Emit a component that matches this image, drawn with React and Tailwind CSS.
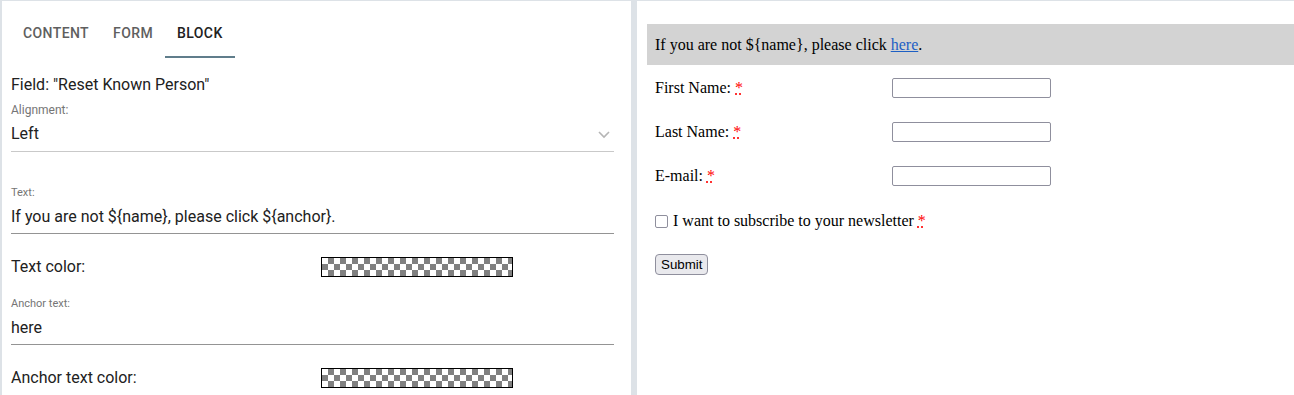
import React from "react";

const tabs = ["Content", "Form", "Block"];

function Swatch() {
  return (
    <div className="w-[192px] h-[20px] border border-black bg-white bg-[image:conic-gradient(#808080_25%,#ffffff_0_50%,#808080_0_75%,#ffffff_0)] bg-[length:12px_12px]" />
  );
}

function Req() {
  return (
    <abbr className="text-[#ff0000] underline decoration-dotted decoration-[#ff0000] ml-1" title="required">
      *
    </abbr>
  );
}

function FormRow({ label }) {
  return (
    <div className="flex items-center h-[20px]">
      <span className="w-[237px] leading-[20px]">
        {label}
        <Req />
      </span>
      <span className="w-[159px] h-[20px] border border-[#8f8f9d] rounded-[2px] bg-white" />
    </div>
  );
}

export default function App() {
  return (
    <div className="w-[1294px] h-[395px] overflow-hidden bg-[#dde2e7] flex pt-[1px] pl-[2px] gap-[6px]">
      {/* Left: editor panel */}
      <div className="w-[629px] bg-white pl-[9px] pr-[17px] font-['Roboto',sans-serif] text-[#212121]">
        <div className="flex h-[49px] mt-[8px]">
          {tabs.map((t) => (
            <div
              key={t}
              className={
                t === "Block"
                  ? "flex items-center px-3 text-sm font-medium uppercase tracking-[0.4px] text-[#212121] border-b-2 border-[#607d8b]"
                  : "flex items-center px-3 text-sm font-medium uppercase tracking-[0.4px] text-[#5f5f5f] border-b-2 border-transparent"
              }
            >
              {t}
            </div>
          ))}
        </div>

        <div className="mt-[15px] text-base leading-[24px]">Field: "Reset Known Person"</div>
        <div className="mt-[5px] text-xs leading-[16px] text-[#757575]">Alignment:</div>
        <div className="mt-[4px] h-[30px] flex justify-between border-b border-[#c9c9c9]">
          <span className="text-base leading-[24px]">Left</span>
          <svg width="14" height="24" viewBox="0 0 14 24" className="mr-[3px]">
            <polyline points="2,10 7,15 12,10" fill="none" stroke="#b5b5b5" strokeWidth="1.6" />
          </svg>
        </div>

        <div className="mt-[34px] text-[11px] leading-[14px] text-[#757575]">Text:</div>
        <div className="mt-[5px] pb-[4px] text-base leading-[24px] border-b border-[#949494]">
          If you are not ${"{name}"}, please click ${"{anchor}"}.
        </div>

        <div className="mt-[22px] flex items-center h-[21px]">
          <span className="w-[310px] text-base">Text color:</span>
          <Swatch />
        </div>

        <div className="mt-[20px] text-[11px] leading-[14px] text-[#757575]">Anchor text:</div>
        <div className="mt-[5px] pb-[4px] text-base leading-[24px] border-b border-[#949494]">here</div>

        <div className="mt-[22px] flex items-center h-[21px]">
          <span className="w-[310px] text-base">Anchor text color:</span>
          <Swatch />
        </div>
      </div>

      {/* Right: preview */}
      <div className="flex-1 bg-white pt-[23px] pl-[10px] font-['Liberation_Serif',serif] text-base text-black">
        <div className="h-[41px] bg-[#d3d3d3] px-2 flex items-center">
          <span>
            If you are not ${"{name}"}, please click{" "}
            <a href="#" className="text-[#1d5fc4] underline">here</a>.
          </span>
        </div>

        <div className="pl-2 mt-[13px] flex flex-col gap-[24px]">
          <FormRow label="First Name:" />
          <FormRow label="Last Name:" />
          <FormRow label="E-mail:" />
          <div className="flex items-center h-[20px] mt-[1px]">
            <span className="w-[13px] h-[13px] border-[1.5px] border-[#8f8f9d] rounded-[2px] bg-white mr-[5px]" />
            <span>
              I want to subscribe to your newsletter
              <Req />
            </span>
          </div>
          <div className="flex mt-[-1px]">
            <button className="h-[21px] px-[5px] bg-[#e9e9ed] border border-[#8f8f9d] rounded-[4px] text-[13.33px] leading-[19px] font-['Liberation_Sans',sans-serif]">
              Submit
            </button>
          </div>
        </div>
      </div>
    </div>
  );
}
